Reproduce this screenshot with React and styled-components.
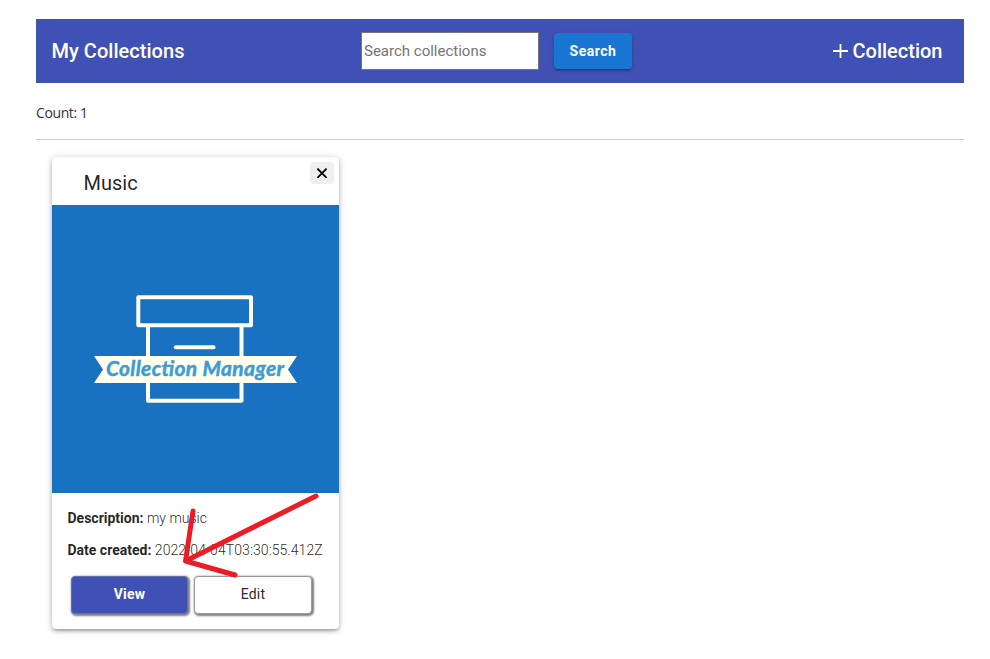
import React from "react";
import styled, { createGlobalStyle } from "styled-components";

const GlobalStyle = createGlobalStyle`
  * { box-sizing: border-box; }
  body { margin: 0; background: #fff; font-family: Roboto, sans-serif; color: rgba(0, 0, 0, 0.87); }
`;

const Page = styled.main`
  padding: 19px 26px 30px 36px;
`;

const Toolbar = styled.header`
  display: grid;
  grid-template-columns: 325px 1fr auto;
  align-items: center;
  height: 64px;
  padding: 0 21.5px 0 0;
  background: #3f51b5;
  color: #fff;
`;

const Title = styled.h1`
  margin: 0 0 0 15.5px;
  font-size: 20px;
  line-height: 32px;
  font-weight: 500;
  letter-spacing: 0.03px;
`;

const SearchForm = styled.div`
  display: flex;
  align-items: center;
  gap: 15px;
`;

const SearchInput = styled.input`
  width: 178px;
  height: 38px;
  padding: 1px 2px;
  border: 1px solid #767676;
  border-radius: 0;
  background: #fff;
  font: 400 15px Roboto, sans-serif;
  &::placeholder { color: #757575; }
`;

const SearchButton = styled.button`
  width: 78px;
  height: 36px;
  padding: 0;
  border: 0;
  border-radius: 4px;
  background: #1976d2;
  color: #fff;
  font: 700 14px Roboto, sans-serif;
  letter-spacing: 0.5px;
  box-shadow: 0 3px 1px -2px rgba(0, 0, 0, 0.2), 0 2px 2px rgba(0, 0, 0, 0.14), 0 1px 5px rgba(0, 0, 0, 0.12);
`;

const AddLink = styled.div`
  display: flex;
  align-items: center;
  gap: 4.5px;
  font-size: 20px;
  line-height: 32px;
  font-weight: 500;
`;

const Count = styled.p`
  height: 57px;
  margin: 0;
  padding-top: 20px;
  border-bottom: 1px solid #ccc;
  font: 400 14px/20px "Open Sans", sans-serif;
  letter-spacing: -0.4px;
  color: #333;
`;

const Card = styled.article`
  position: relative;
  width: 287px;
  height: 472px;
  margin: 17px 0 0 16px;
  border-radius: 4px;
  background: #fff;
  box-shadow: 0 3px 3px -2px rgba(0, 0, 0, 0.2), 0 2px 4px rgba(0, 0, 0, 0.22), 0 1px 8px rgba(0, 0, 0, 0.14);
`;

const CardHeader = styled.div`
  display: flex;
  justify-content: space-between;
  align-items: flex-start;
  height: 48px;
  padding: 5px 5px 0 31.5px;
`;

const CardTitle = styled.h2`
  margin: 5px 0 0;
  font-size: 20px;
  line-height: 32px;
  font-weight: 400;
`;

const CloseButton = styled.button`
  display: grid;
  place-items: center;
  width: 24px;
  height: 22px;
  padding: 0;
  border: 0;
  border-radius: 4px;
  background: #efefef;
`;

const Cover = styled.svg`
  display: block;
  width: 287px;
  height: 288px;
  background: #1971c2;
`;

const Details = styled.div`
  padding: 9px 15px 0 15.5px;
`;

const Detail = styled.p`
  margin: 0;
  font-size: 14px;
  line-height: 32px;
  font-weight: 300;
  letter-spacing: ${(p) => p.$spacing || "0"};
  white-space: nowrap;
  b { font-weight: 700; letter-spacing: 0; }
`;

const Actions = styled.div`
  display: flex;
  gap: 6px;
  padding: 10px 0 0 3.5px;
`;

const ActionButton = styled.button`
  width: ${(p) => (p.$primary ? "117px" : "118px")};
  height: 38px;
  padding: 0 0 2px;
  border: 1px solid ${(p) => (p.$primary ? "#6670a8" : "#999")};
  border-radius: 4px;
  background: ${(p) => (p.$primary ? "#3f51b5" : "#fff")};
  color: ${(p) => (p.$primary ? "#fff" : "rgba(0, 0, 0, 0.87)")};
  font: ${(p) => (p.$primary ? 700 : 400)} 14px Roboto, sans-serif;
  letter-spacing: 0.2px;
  box-shadow: 1px 1px 2px 1px rgba(0, 0, 0, 0.5);
`;

const Arrow = styled.svg`
  position: absolute;
  left: 128px;
  top: 333px;
  pointer-events: none;
`;

export default function App() {
  return (
    <>
      <GlobalStyle />
      <Page>
        <Toolbar>
          <Title>My Collections</Title>
          <SearchForm>
            <SearchInput placeholder="Search collections" />
            <SearchButton>Search</SearchButton>
          </SearchForm>
          <AddLink>
            <svg width="15" height="14" viewBox="0 0 15 14" stroke="#fff" strokeWidth="1.8">
              <path d="M0 7H15M7.5 0V14" />
            </svg>
            Collection
          </AddLink>
        </Toolbar>
        <Count>Count: 1</Count>
        <Card>
          <CardHeader>
            <CardTitle>Music</CardTitle>
            <CloseButton aria-label="Close">
              <svg width="10" height="10" viewBox="0 0 10 10" stroke="#000" strokeWidth="1.8">
                <path d="M.4 .6L9.6 9.8M9.6 .6L.4 9.8" />
              </svg>
            </CloseButton>
          </CardHeader>
          <Cover viewBox="0 0 287 288">
            <g fill="none" stroke="#ffffed" strokeWidth="4" strokeLinejoin="round">
              <rect x="86.3" y="92.3" width="112.7" height="28" />
              <path d="M96 122V195.7H189.5V122" />
              <path d="M123.8 142.3H161.5" strokeLinecap="round" />
            </g>
            <path d="M42 151H245L236 164.5L245 178H42L51 164.5Z" fill="#ffffed" />
            <text
              x="54"
              y="171"
              textLength="178"
              fontFamily="Lato"
              fontSize="21"
              fontWeight="700"
              fontStyle="italic"
              fill="#3d9bd6"
              stroke="#3d9bd6"
              strokeWidth="0.5"
            >
              Collection Manager
            </text>
          </Cover>
          <Details>
            <Detail><b>Description:</b> my music</Detail>
            <Detail $spacing="0.08px"><b>Date created:</b> 2022-04-04T03:30:55.412Z</Detail>
            <Actions>
              <ActionButton $primary>View</ActionButton>
              <ActionButton>Edit</ActionButton>
            </Actions>
          </Details>
          <Arrow width="142" height="90" viewBox="0 0 142 90" fill="none" stroke="#ed1c24" strokeWidth="5" strokeLinecap="round" strokeLinejoin="round">
            <path d="M136 6L5.5 71L13 21M5.5 71L55 85" />
          </Arrow>
        </Card>
      </Page>
    </>
  );
}
